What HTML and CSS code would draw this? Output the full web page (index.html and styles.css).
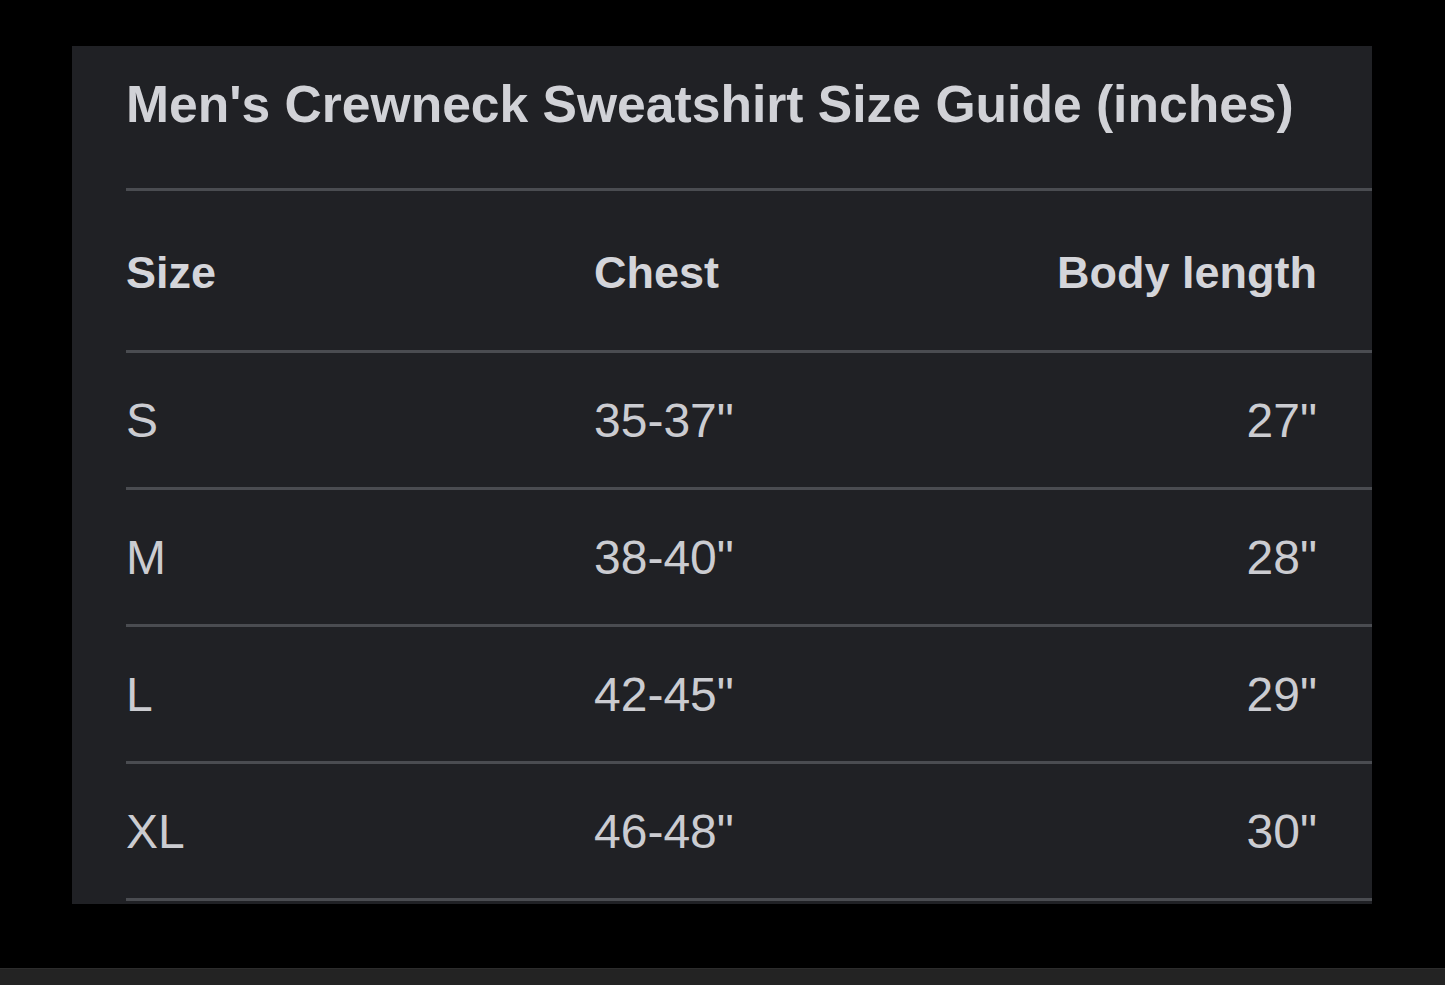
FILE: index.html
```html
<!DOCTYPE html>
<html lang="en">
<head>
<meta charset="utf-8">
<title>Men's Crewneck Sweatshirt Size Guide</title>
<link rel="stylesheet" href="styles.css">
</head>
<body>
<div class="stage">
  <section class="panel">
    <h1 class="title">Men's Crewneck Sweatshirt Size Guide (inches)</h1>
    <div class="table">
      <div class="row head">
        <div class="cell">Size</div>
        <div class="cell">Chest</div>
        <div class="cell right">Body length</div>
      </div>
      <div class="row">
        <div class="cell">S</div>
        <div class="cell">35-37"</div>
        <div class="cell right">27"</div>
      </div>
      <div class="row">
        <div class="cell">M</div>
        <div class="cell">38-40"</div>
        <div class="cell right">28"</div>
      </div>
      <div class="row">
        <div class="cell">L</div>
        <div class="cell">42-45"</div>
        <div class="cell right">29"</div>
      </div>
      <div class="row last">
        <div class="cell">XL</div>
        <div class="cell">46-48"</div>
        <div class="cell right">30"</div>
      </div>
    </div>
  </section>
</div>
<div class="bottom-bar"></div>
</body>
</html>
```
FILE: styles.css
```css
html, body {
  margin: 0;
  padding: 0;
  background: #000;
  font-family: "Liberation Sans", Arial, sans-serif;
}
body {
  height: 985px;
  display: flex;
  flex-direction: column;
  overflow: hidden;
}
.stage {
  flex: 1;
  padding: 46px 0 0 72px;
}
.panel {
  width: 1246px;
  background: #202125;
  padding: 28px 0 3px 54px;
}
.title {
  margin: 0 0 54px 0;
  font-size: 51.6px;
  line-height: 60px;
  font-weight: 700;
  color: #d1d2d7;
}
.row {
  display: grid;
  grid-template-columns: 468px 1fr auto;
  padding: 40px 55px 38px 0;
  border-top: 3px solid #4a4c51;
  font-size: 48px;
  line-height: 56px;
  color: #cbccd1;
}
.row.head {
  padding: 56px 55px 51px 0;
  font-size: 45px;
  line-height: 52px;
  font-weight: 700;
  color: #d4d5da;
}
.row.last {
  border-bottom: 3px solid #4a4c51;
}
.cell.right {
  text-align: right;
}
.bottom-bar {
  height: 16px;
  background: #232323;
  border-top: 1px solid #2c2c2c;
}
```
